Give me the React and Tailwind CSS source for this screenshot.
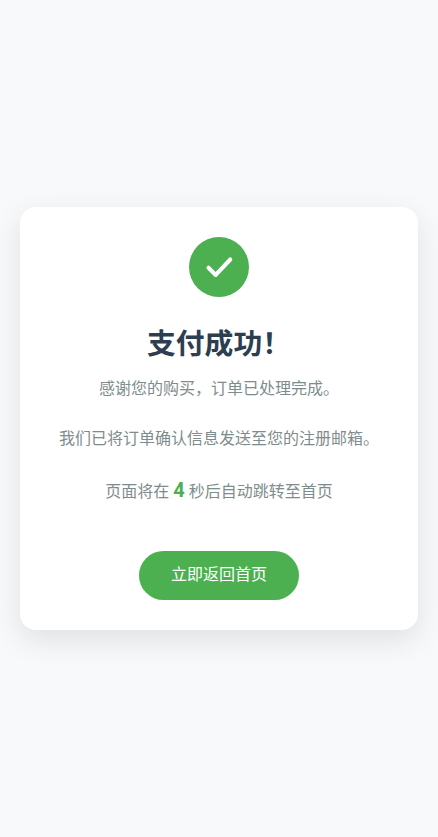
export default function App() {
  return (
    <div className="min-h-[837px] bg-[#f8f9fa] flex items-center justify-center px-5 font-['Roboto','Noto_Sans_CJK_SC',sans-serif]">
      <div className="w-full bg-white rounded-2xl p-[30px] text-center shadow-[0_10px_30px_rgba(0,0,0,0.1)]">
        <div className="w-[60px] h-[60px] rounded-full bg-[#4caf50] mx-auto mb-[25px] flex items-center justify-center">
          <svg viewBox="0 0 24 24" className="w-[36px] h-[36px]" fill="none" stroke="#fff" strokeWidth="2.7" strokeLinecap="round" strokeLinejoin="round">
            <path d="M5 12.5l4.8 4.8L19.5 7" />
          </svg>
        </div>
        <h1 className="text-[28.8px] font-bold text-[#2c3e50] mb-[10px] leading-[44px]">支付成功！</h1>
        <p className="text-base text-[#7f8c8d] leading-[1.6] mb-6">感谢您的购买，订单已处理完成。</p>
        <p className="text-base text-[#7f8c8d] leading-[1.6] mb-[22px]">我们已将订单确认信息发送至您的注册邮箱。</p>
        <p className="text-base text-[#7f8c8d] leading-[1.6] mb-[35px]">
          页面将在 <span className="text-[20px] font-bold text-[#4caf50]">4</span> 秒后自动跳转至首页
        </p>
        <button className="w-[160px] h-[49px] rounded-full bg-[#4caf50] text-white text-base mt-[10px]">立即返回首页</button>
      </div>
    </div>
  );
}
